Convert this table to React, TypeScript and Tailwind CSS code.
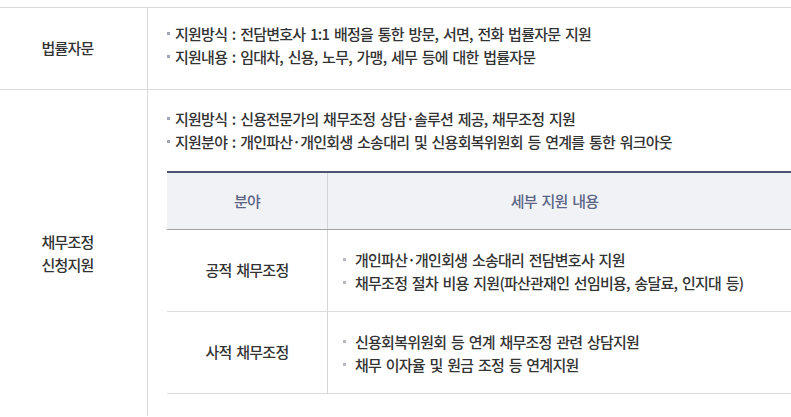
const font = "font-['Noto_Sans_CJK_KR','Noto_Sans',sans-serif]";

function Bullets({ items, inner = false }: { items: string[]; inner?: boolean }) {
  return (
    <ul>
      {items.map((t) => (
        <li key={t} className="flex items-center leading-[23px]">
          <span
            className={
              inner
                ? "mr-[9px] h-[3px] w-[3px] shrink-0 bg-[#b3b8c4]"
                : "mr-[5px] h-[3px] w-[3px] shrink-0 bg-[#9ea6b8]"
            }
          />
          <span>{t}</span>
        </li>
      ))}
    </ul>
  );
}

const subRows = [
  {
    name: "공적 채무조정",
    items: [
      "개인파산·개인회생 소송대리 전담변호사 지원",
      "채무조정 절차 비용 지원(파산관재인 선임비용, 송달료, 인지대 등)",
    ],
  },
  {
    name: "사적 채무조정",
    items: ["신용회복위원회 등 연계 채무조정 관련 상담지원", "채무 이자율 및 원금 조정 등 연계지원"],
  },
];

export default function App() {
  return (
    <div
      className={`${font} h-[417px] w-[791px] overflow-hidden bg-white pt-[7px] text-[15px] font-medium tracking-[-0.05em] text-[#333] [word-spacing:2px]`}
    >
      <div className="border-t border-[#dadada]">
        {/* 법률자문 */}
        <div className="flex border-b border-[#dadada]">
          <div className="flex w-[148px] shrink-0 items-center justify-center border-r border-[#dadada] pr-3">
            법률자문
          </div>
          <div className="flex-1 pb-[21px] pl-[19px] pt-[14px]">
            <Bullets
              items={[
                "지원방식 : 전담변호사 1:1 배정을 통한 방문, 서면, 전화 법률자문 지원",
                "지원내용 : 임대차, 신용, 노무, 가맹, 세무 등에 대한 법률자문",
              ]}
            />
          </div>
        </div>

        {/* 채무조정 신청지원 */}
        <div className="flex">
          <div className="flex w-[148px] shrink-0 items-center justify-center border-r border-[#dadada] pr-3 text-center leading-[23px]">
            채무조정
            <br />
            신청지원
          </div>
          <div className="flex-1 pb-[22px] pl-[19px] pt-[17px]">
            <Bullets
              items={[
                "지원방식 : 신용전문가의 채무조정 상담·솔루션 제공, 채무조정 지원",
                "지원분야 : 개인파산·개인회생 소송대리 및 신용회복위원회 등 연계를 통한 워크아웃",
              ]}
            />
            <div className="mt-[18px] border-t-2 border-[#4b5371]">
              <div className="flex h-[57px] border-b border-[#a3a3a3] bg-[#f1f2f6] text-[#5b6485]">
                <div className="flex w-[161px] items-center justify-center border-r border-[#d4d4d4]">분야</div>
                <div className="flex flex-1 items-center justify-center pr-[10px]">세부 지원 내용</div>
              </div>
              {subRows.map((r) => (
                <div key={r.name} className="flex h-[82px] border-b border-[#dcdcdc]">
                  <div className="flex w-[161px] items-center justify-center border-r border-[#d4d4d4]">
                    {r.name}
                  </div>
                  <div className="flex flex-1 items-center pl-[15px] pt-[1px]">
                    <Bullets items={r.items} inner />
                  </div>
                </div>
              ))}
            </div>
          </div>
        </div>
      </div>
    </div>
  );
}
